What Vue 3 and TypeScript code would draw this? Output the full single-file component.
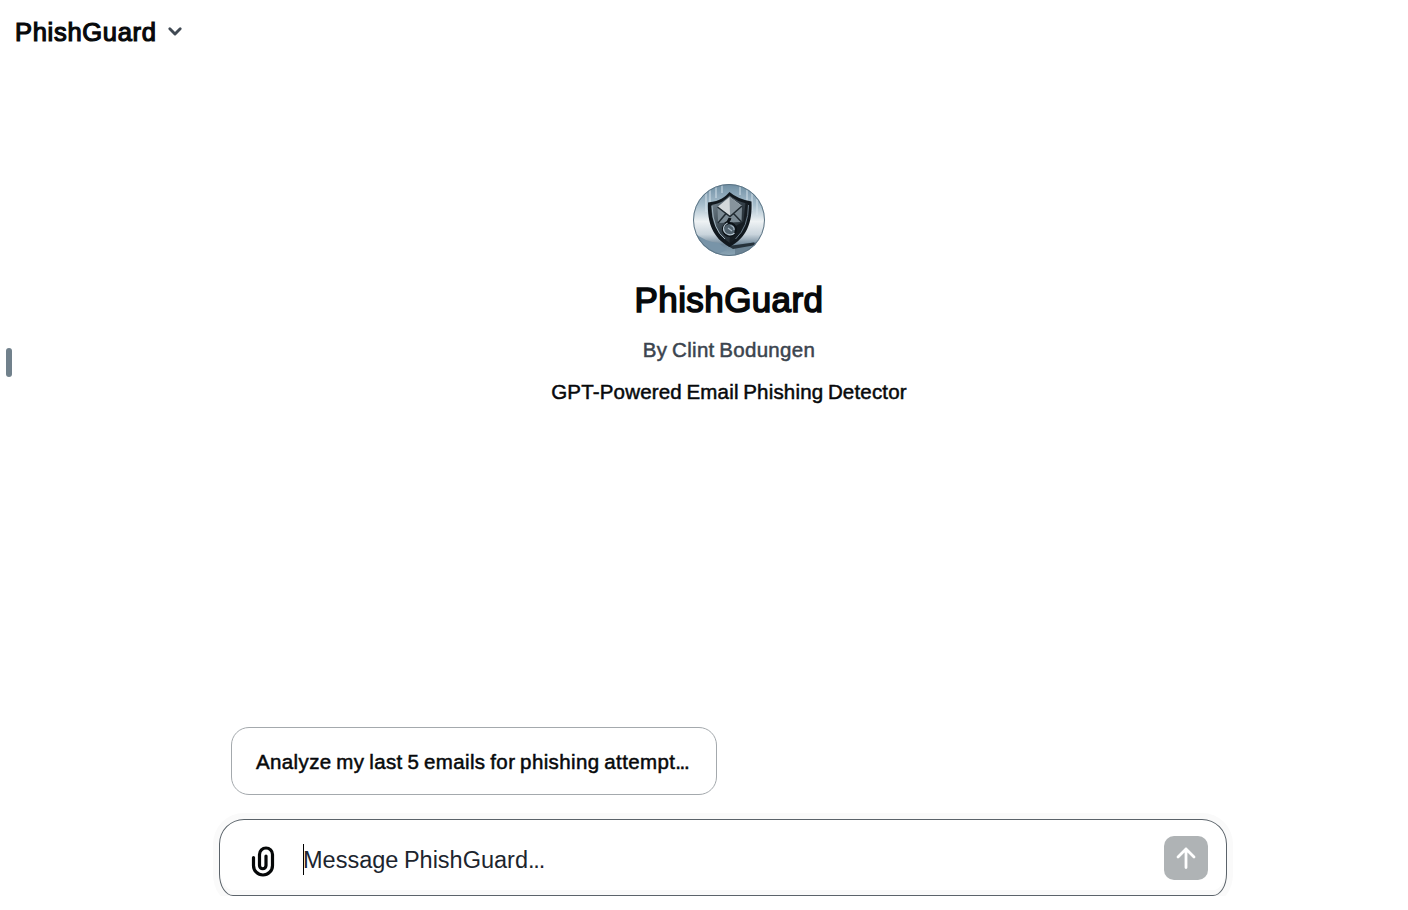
<script setup lang="ts">
import { ref } from 'vue'

const name = 'PhishGuard'
const author = 'By Clint Bodungen'
const description = 'GPT-Powered Email Phishing Detector'
const starters = ref<string[]>(['Analyze my last 5 emails for phishing attempt'])
</script>

<template>
  <div class="page">
    <header class="topbar">
      <span class="brand">{{ name }}</span>
      <svg class="chevron" width="16" height="12" viewBox="0 0 16 12" fill="none">
        <path d="M2.800 2.800 8 8l5.200-5.200" stroke="#414a54" stroke-width="2.900" stroke-linecap="round" stroke-linejoin="round" />
      </svg>
    </header>
    <div class="handle"></div>

    <main class="hero">
      <svg class="avatar" width="72" height="72" viewBox="0 0 72 72">
        <defs>
          <linearGradient id="sky" x1="0" y1="0" x2="0" y2="1">
            <stop offset="0" stop-color="#6f8ea3" />
            <stop offset=".3" stop-color="#a9c0ce" />
            <stop offset=".52" stop-color="#eef2f4" />
            <stop offset=".7" stop-color="#c9d4dc" />
            <stop offset=".84" stop-color="#71899b" />
            <stop offset="1" stop-color="#8da8b8" />
          </linearGradient>
          <linearGradient id="steel" x1="0" y1="0" x2="1" y2="1">
            <stop offset="0" stop-color="#7d8d98" />
            <stop offset=".5" stop-color="#35414a" />
            <stop offset="1" stop-color="#11171c" />
          </linearGradient>
          <clipPath id="disc"><circle cx="36" cy="36" r="36" /></clipPath>
        </defs>
        <g clip-path="url(#disc)">
          <rect width="72" height="72" fill="url(#sky)" />
          <path d="M13 8v20M17 4v18M23 1v13M29 0v9M47 0v11M54 3v14M59 7v20M64 15v16" stroke="#dce8ef" stroke-width="1.500" opacity=".6" />
          <path d="M0 48q12 10 26 11l8 7-14 6Q6 66 0 48z" fill="#7894a8" />
          <path d="M42 62q13-4 25-4l-6 8-19 5z" fill="#6b8394" />
          <path d="M35 62 61 58.500 63 61 40 65z" fill="#26323b" />
          <path d="M36.500 8q8 7 22 9.500c1 22-5 36-22 45.500C20 54 14 39 15 18.500 28 17 32 13 36.500 8z" fill="#11181e" />
          <path d="M36.500 11.500q7 6 18 8.200c0 19-4 30-18 39C24 51 18 38 18.500 21 28 19.500 32 16 36.500 11.500z" fill="url(#steel)" />
          <path d="M54.500 19.700c0 19-4 30-18 39l1-14 13-7 2-19z" fill="#151c22" />
          <path d="M19 22q1 24 13 33" fill="none" stroke="#a2b4c0" stroke-width="1" />
          <path d="M55.500 21q0 22-13 34" fill="none" stroke="#8196a4" stroke-width=".8" />
          <path d="M24.500 23 36.500 13l12.500 9-.5 16-23.500 1z" fill="#7b8a94" />
          <path d="M24.500 23 36.500 13l12.500 9-12 10z" fill="#d3d8db" />
          <path d="M36.500 13l12.500 9-12 10z" fill="#87949d" />
          <path d="m24.500 23 12.500 9.500L49 22M25 39l8-9.500M48.500 38l-8-8.500" fill="none" stroke="#202a31" stroke-width="1.500" />
          <circle cx="36.500" cy="45.500" r="6.500" fill="#52636f" stroke="#0c1217" stroke-width="2.200" />
          <path d="M37 34q-1 4-5 6" fill="none" stroke="#0c1217" stroke-width="3" />
          <path d="M34.500 39c-4 2-5 6-3 9s7 4 10 1" fill="none" stroke="#b1c1cc" stroke-width="1.300" />
          <path d="M37.500 41.500q4 1 3.500 4.500M35 44l4 3" fill="none" stroke="#a5b6c2" stroke-width="1.200" />
        </g>
        <circle cx="36" cy="36" r="35.500" fill="none" stroke="#5b7383" />
      </svg>
      <h1 class="title">{{ name }}</h1>
      <p class="author">{{ author }}</p>
      <p class="description">{{ description }}</p>
    </main>

    <footer class="bottom">
      <button v-for="s in starters" :key="s" class="starter">{{ s }}<span class="dots">...</span></button>
      <div class="composer">
        <svg class="clip" width="24" height="32" viewBox="0 0 24 32" fill="none" stroke="#050708" stroke-width="3.200" stroke-linecap="round">
          <path d="M2.500 11.500V19.500a9.500 9.500 0 0 0 19 0V8.500a6.500 6.500 0 0 0-13 0V19.500a3.250 3.250 0 0 0 6.500 0V10" />
        </svg>
        <span class="caret"></span>
        <span class="placeholder">Message {{ name }}<span class="dots">...</span></span>
        <button class="send" aria-label="Send">
          <svg width="22" height="24" viewBox="0 0 22 24" fill="none" stroke="#fff" stroke-width="2.800" stroke-linecap="round" stroke-linejoin="round">
            <path d="M11 21.500V3M3 11l8-8 8 8" />
          </svg>
        </button>
      </div>
    </footer>
  </div>
</template>

<style>
body {
  margin: 0;
  background: #fff;
}
</style>

<style scoped>
.page {
  position: relative;
  box-sizing: border-box;
  width: 1408px;
  height: 910px;
  overflow: hidden;
  display: flex;
  flex-direction: column;
  background: #fff;
  color: #07090b;
  font-family: "Liberation Sans", Arial, sans-serif;
  white-space: nowrap;
}
.topbar {
  display: flex;
  align-items: center;
  height: 64px;
  padding-left: 15px;
  flex: none;
}
.brand {
  width: 152px;
  font-size: 25.500px;
  letter-spacing: 0.700px;
  -webkit-text-stroke: 1.200px currentColor;
}
.handle {
  position: absolute;
  left: 6px;
  top: 348px;
  width: 6px;
  height: 29px;
  border-radius: 3px;
  background: #71818c;
}
.hero {
  display: flex;
  flex-direction: column;
  align-items: center;
  height: 663px;
  padding: 120px 0 0 50px;
  box-sizing: border-box;
  flex: none;
}
.title {
  margin: 22px 0 0;
  font-size: 35px;
  line-height: 44px;
  font-weight: 400;
  letter-spacing: 0.400px;
  -webkit-text-stroke: 1.600px currentColor;
}
.author,
.description {
  margin: 0;
  font-size: 20.500px;
  line-height: 28px;
  -webkit-text-stroke: 0.500px currentColor;
}
.author {
  margin-top: 14px;
  color: #3b444e;
  letter-spacing: 0.300px;
  word-spacing: -1.300px;
}
.description {
  margin-top: 14px;
  letter-spacing: 0.180px;
  word-spacing: -1.300px;
}
.bottom {
  display: flex;
  flex-direction: column;
  align-items: flex-start;
  padding-left: 219px;
}
button {
  padding: 0;
  border: 0;
  color: inherit;
  font: inherit;
}
.starter {
  box-sizing: border-box;
  width: 486px;
  height: 68px;
  margin-left: 12px;
  padding: 1px 0 0 24px;
  border: 1px solid #a4a9ad;
  border-radius: 18px;
  background: #fff;
  text-align: left;
  font-size: 20.500px;
  letter-spacing: 0.380px;
  word-spacing: -1.300px;
  -webkit-text-stroke: 0.500px currentColor;
}
.dots {
  letter-spacing: -1.400px;
}
.composer {
  box-sizing: border-box;
  display: flex;
  align-items: center;
  width: 1008px;
  height: 77px;
  margin-top: 24px;
  padding: 5px 18px 0 31px;
  border: 1px solid #5b636a;
  border-radius: 25px 25px 14px 14px / 25px 25px 22px 22px;
  box-shadow: 0 0 0 6px #fafafa, inset 0 -5px 0 #fafafa;
  clip-path: inset(-6px -6px 0 -6px);
}
.clip {
  flex: none;
  margin-top: 3px;
}
.caret {
  width: 1px;
  height: 31px;
  margin: -1px 0 0 28px;
  background: #000;
}
.placeholder {
  flex: 1;
  margin-left: -1px;
  color: #1c252e;
  font-size: 23.500px;
  letter-spacing: 0;
  word-spacing: -1px;
}
.placeholder .dots {
  letter-spacing: -1.200px;
}
.send {
  display: flex;
  align-items: center;
  justify-content: center;
  width: 44px;
  height: 44px;
  margin-top: -4px;
  border-radius: 10px;
  background: #afb3b5;
}
</style>
